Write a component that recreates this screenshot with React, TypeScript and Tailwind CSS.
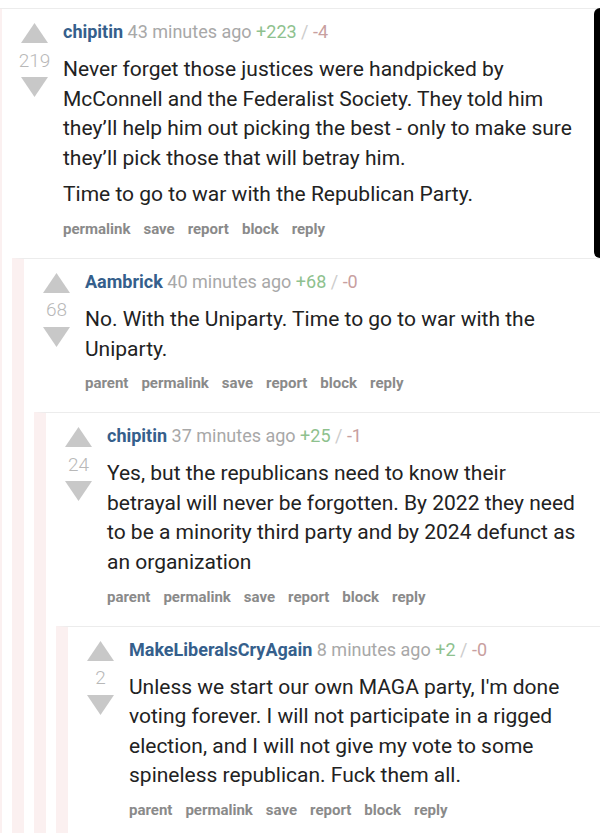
import React from "react";

type C = {
  user: string;
  time: string;
  plus: string;
  minus: string;
  score: string;
  body: string[][];
  links: string[];
  children?: React.ReactNode;
};

function Up() {
  return (
    <svg width="27" height="20" viewBox="0 0 27 20">
      <polygon points="13.5,0 27,20 0,20" fill="#c8c8c8" />
    </svg>
  );
}
function Down() {
  return (
    <svg width="27" height="20" viewBox="0 0 27 20">
      <polygon points="0,0 27,0 13.5,20" fill="#c8c8c8" />
    </svg>
  );
}

function Comment({ user, time, plus, minus, score, body, links, children }: C) {
  return (
    <div className="border-l-[12px] border-l-[#fbf0f0] border-t border-t-[#ececec]">
      <div className="flex">
        <div className="w-[55px] pl-[10px] flex flex-col items-center pt-[14px] shrink-0">
          <Up />
          <div className="h-[34px] flex items-center justify-center text-[19px] font-light text-[#b8b8b8] leading-none">
            {score}
          </div>
          <Down />
        </div>
        <div className="flex-1 min-w-0 pl-[6px] pt-[11px] pb-[19px] pr-[4px]">
          <div className="h-[24px] leading-[24px] text-[18px] whitespace-nowrap">
            <span className="font-bold text-[#355f8c]">{user}</span>
            <span className="text-[#a8a8a8]"> {time} </span>
            <span className="text-[#8ec18e]">{plus}</span>
            <span className="text-[#cccccc]"> / </span>
            <span className="text-[#c8a0a0]">{minus}</span>
          </div>
          <div className="mt-[11px] text-[21px] leading-[29.6px] text-[#222]">
            {body.map((p, i) => (
              <p key={i} className={i > 0 ? "mt-[7px]" : ""}>
                {p.map((line, j) => (
                  <span key={j} className="block whitespace-nowrap">
                    {line}
                  </span>
                ))}
              </p>
            ))}
          </div>
          <div className="mt-[9px] h-[20px] leading-[20px] text-[15px] font-bold text-[#8a8a8a] flex gap-[13px]">
            {links.map((l) => (
              <span key={l}>{l}</span>
            ))}
          </div>
        </div>
      </div>
      {children ? <div className="pl-[10px]">{children}</div> : null}
    </div>
  );
}

export default function App() {
  const full = ["parent", "permalink", "save", "report", "block", "reply"];
  return (
    <div
      className="w-[600px] h-[833px] overflow-hidden bg-white relative pt-[8px]"
      style={{ fontFamily: "Roboto, 'Liberation Sans', sans-serif" }}
    >
      <div className="ml-[-10px]">
        <Comment
          user="chipitin"
          time="43 minutes ago"
          plus="+223"
          minus="-4"
          score="219"
          body={[
            [
              "Never forget those justices were handpicked by",
              "McConnell and the Federalist Society. They told him",
              "they\u2019ll help him out picking the best - only to make sure",
              "they\u2019ll pick those that will betray him.",
            ],
            ["Time to go to war with the Republican Party."],
          ]}
          links={["permalink", "save", "report", "block", "reply"]}
        >
          <Comment
            user="Aambrick"
            time="40 minutes ago"
            plus="+68"
            minus="-0"
            score="68"
            body={[["No. With the Uniparty. Time to go to war with the", "Uniparty."]]}
            links={full}
          >
            <Comment
              user="chipitin"
              time="37 minutes ago"
              plus="+25"
              minus="-1"
              score="24"
              body={[
                [
                  "Yes, but the republicans need to know their",
                  "betrayal will never be forgotten. By 2022 they need",
                  "to be a minority third party and by 2024 defunct as",
                  "an organization",
                ],
              ]}
              links={full}
            >
              <Comment
                user="MakeLiberalsCryAgain"
                time="8 minutes ago"
                plus="+2"
                minus="-0"
                score="2"
                body={[
                  [
                    "Unless we start our own MAGA party, I'm done",
                    "voting forever. I will not participate in a rigged",
                    "election, and I will not give my vote to some",
                    "spineless republican. Fuck them all.",
                  ],
                ]}
                links={full}
              />
            </Comment>
          </Comment>
        </Comment>
      </div>
      <div className="absolute right-0 top-[8px] w-[6px] h-[250px] bg-black rounded-l-[6px]" />
    </div>
  );
}
